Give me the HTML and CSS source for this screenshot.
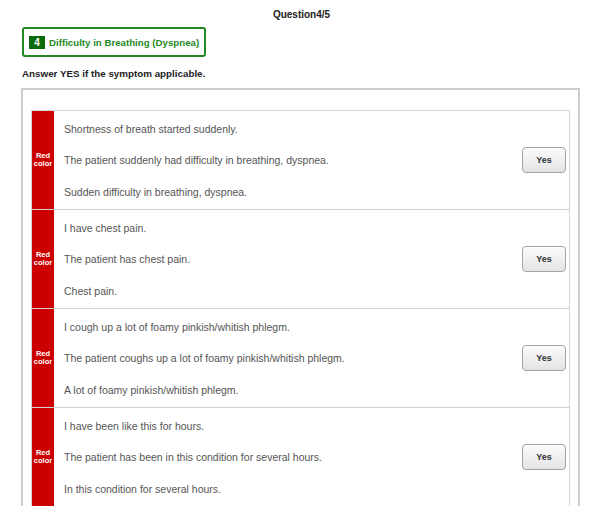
FILE: index.html
```html
<!DOCTYPE html>
<html>
<head>
<meta charset="utf-8">
<link rel="stylesheet" href="styles.css">
</head>
<body>
<div class="page">
  <div class="qnum">Question4/5</div>
  <div class="cat"><span class="cat-num">4</span><span class="cat-title">Difficulty in Breathing (Dyspnea)</span></div>
  <div class="lead">Answer YES if the symptom applicable.</div>
  <div class="panel">
    <div class="list">
      <div class="row">
        <div class="flag">Red<br>color</div>
        <div class="texts">
          <p>Shortness of breath started suddenly.</p>
          <p>The patient suddenly had difficulty in breathing, dyspnea.</p>
          <p>Sudden difficulty in breathing, dyspnea.</p>
        </div>
        <div class="act"><button class="yes">Yes</button></div>
      </div>
      <div class="row">
        <div class="flag">Red<br>color</div>
        <div class="texts">
          <p>I have chest pain.</p>
          <p>The patient has chest pain.</p>
          <p>Chest pain.</p>
        </div>
        <div class="act"><button class="yes">Yes</button></div>
      </div>
      <div class="row">
        <div class="flag">Red<br>color</div>
        <div class="texts">
          <p>I cough up a lot of foamy pinkish/whitish phlegm.</p>
          <p>The patient coughs up a lot of foamy pinkish/whitish phlegm.</p>
          <p>A lot of foamy pinkish/whitish phlegm.</p>
        </div>
        <div class="act"><button class="yes">Yes</button></div>
      </div>
      <div class="row">
        <div class="flag">Red<br>color</div>
        <div class="texts">
          <p>I have been like this for hours.</p>
          <p>The patient has been in this condition for several hours.</p>
          <p>In this condition for several hours.</p>
        </div>
        <div class="act"><button class="yes">Yes</button></div>
      </div>
    </div>
  </div>
</div>
</body>
</html>
```
FILE: styles.css
```css
html, body {
  margin: 0;
  padding: 0;
  background: #fff;
  overflow: hidden;
}
body {
  font-family: "Liberation Sans", Arial, sans-serif;
  color: #222;
}
.page {
  width: 600px;
  height: 506px;
  overflow: hidden;
  padding: 0 20px 0 21px;
  box-sizing: border-box;
}
.qnum {
  text-align: center;
  font-size: 10px;
  font-weight: bold;
  line-height: 12px;
  padding-top: 9px;
  padding-left: 2px;
  color: #222;
}
.cat {
  display: inline-flex;
  align-items: center;
  margin-top: 6px;
  margin-left: 1px;
  height: 30px;
  width: 184px;
  box-sizing: border-box;
  border: 2px solid #238a23;
  border-radius: 3px;
  padding-left: 5px;
}
.cat-num {
  display: inline-block;
  width: 16px;
  height: 13px;
  line-height: 13px;
  background: #0b6b0b;
  color: #fff;
  font-size: 10px;
  font-weight: bold;
  text-align: center;
  margin-right: 4px;
}
.cat-title {
  color: #1f8a1f;
  font-size: 9.7px;
  font-weight: bold;
  white-space: nowrap;
}
.lead {
  font-size: 9.8px;
  font-weight: bold;
  line-height: 12px;
  margin-top: 11px;
  margin-left: 1px;
  color: #222;
}
.panel {
  margin-top: 8px;
  border: 2px solid #cdcdcd;
  border-bottom: none;
  padding: 20px 8px 0 8px;
  height: 500px;
}
.list {
  border: 1px solid #d6d6d6;
  border-bottom: none;
}
.row {
  display: flex;
  height: 98px;
  border-bottom: 1px solid #d0d0d0;
}
.flag {
  width: 22px;
  flex: none;
  background: #cc0000;
  color: #fff;
  font-size: 7.5px;
  font-weight: bold;
  line-height: 8px;
  text-align: center;
  display: flex;
  align-items: center;
  justify-content: center;
}
.texts {
  flex: 1;
  display: flex;
  flex-direction: column;
  justify-content: center;
  gap: 15.5px;
  padding-left: 10px;
}
.texts p {
  margin: 0;
  font-size: 10.5px;
  line-height: 16px;
  color: #555;
}
.act {
  display: flex;
  align-items: center;
  padding-right: 3px;
}
.yes {
  width: 44px;
  height: 26px;
  border: 1px solid #a3a3a3;
  border-radius: 4px;
  background: linear-gradient(#fbfbfb, #e4e4e4);
  font-family: "Liberation Sans", Arial, sans-serif;
  font-size: 9px;
  font-weight: bold;
  color: #333;
  padding: 0;
  box-shadow: inset 0 1px 0 #fff;
}
```
